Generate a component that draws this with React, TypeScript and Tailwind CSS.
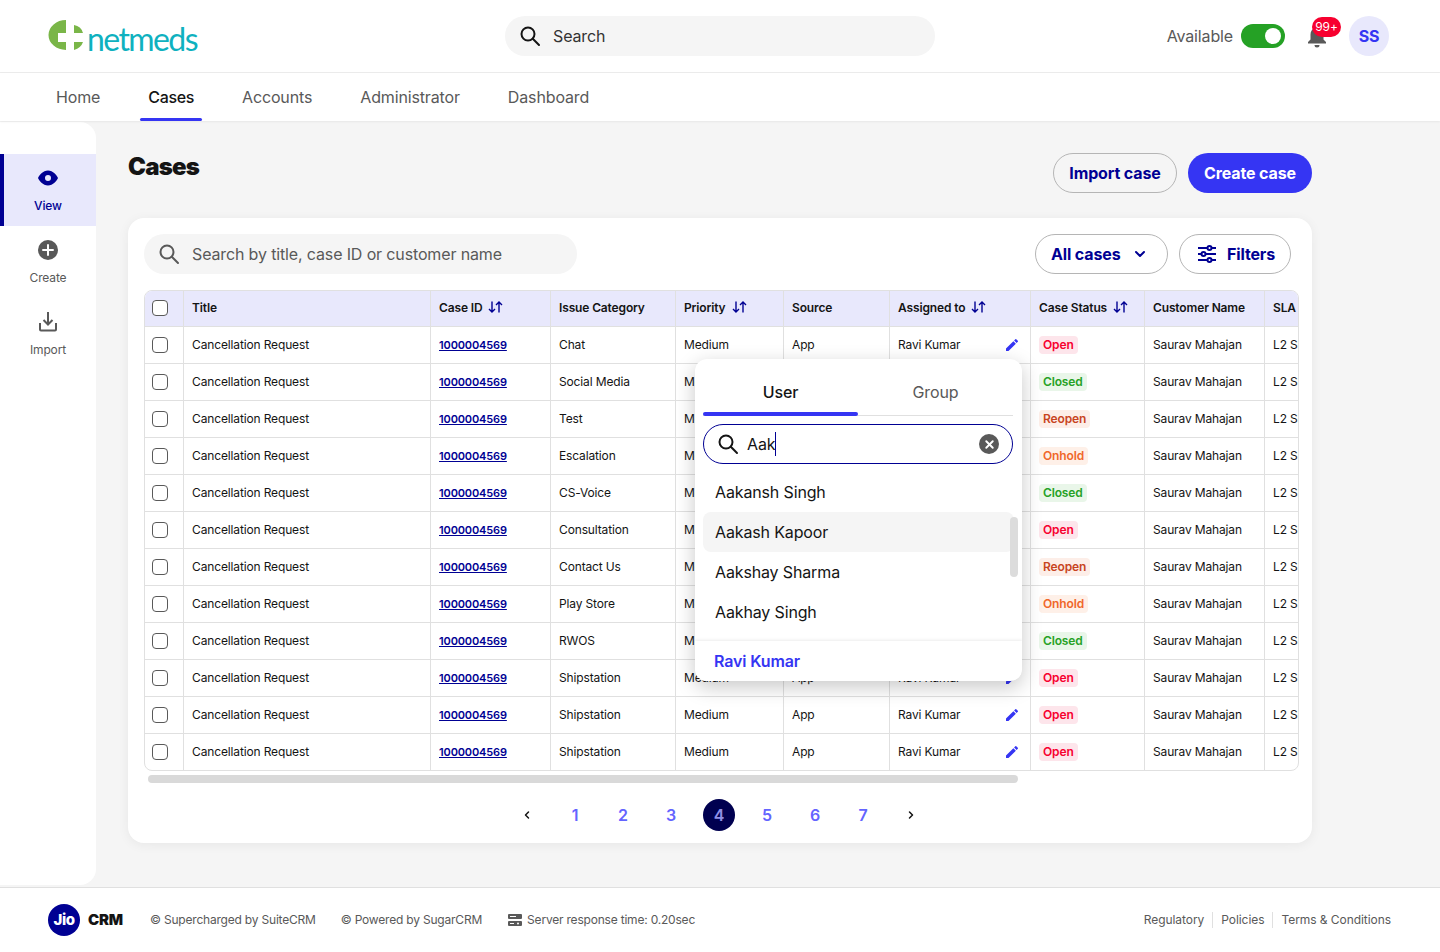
import { ChevronDown, ChevronLeft, ChevronRight, X } from "lucide-react";

const rows = [
  ["Chat", "Open"],
  ["Social Media", "Closed"],
  ["Test", "Reopen"],
  ["Escalation", "Onhold"],
  ["CS-Voice", "Closed"],
  ["Consultation", "Open"],
  ["Contact Us", "Reopen"],
  ["Play Store", "Onhold"],
  ["RWOS", "Closed"],
  ["Shipstation", "Open"],
  ["Shipstation", "Open"],
  ["Shipstation", "Open"],
];

const statusClass: Record<string, string> = {
  Open: "bg-[#fde5eb] text-[#f7002f]",
  Closed: "bg-[#e9f6e9] text-[#25a125]",
  Reopen: "bg-[#fdeee8] text-[#c8441f]",
  Onhold: "bg-[#fef0e8] text-[#f0672a]",
};

function SearchIcon({ color }: { color: string }) {
  return (
    <svg width="22" height="22" viewBox="0 0 22 22" fill="none" stroke={color} strokeWidth="2" className="shrink-0">
      <circle cx="9" cy="9" r="6.500" />
      <path d="M13.800 13.800L20 20" strokeLinecap="round" />
    </svg>
  );
}

function SortIcon() {
  return (
    <svg width="15" height="12" viewBox="0 0 15 12" fill="none" stroke="#000093" strokeWidth="1.4" className="ml-[6px] inline-block align-[-1px]">
      <path d="M4 0.500V11M1 8l3 3 3-3" />
      <path d="M11 11.500V1M8 4l3-3 3 3" />
    </svg>
  );
}

function EditIcon() {
  return (
    <svg width="16" height="16" viewBox="0 0 24 24" fill="#3535f3">
      <path d="M3 17.250V21h3.750L17.810 9.940l-3.750-3.750L3 17.250zM20.710 7.040a1 1 0 0 0 0-1.410l-2.340-2.340a1 1 0 0 0-1.410 0l-1.830 1.830 3.750 3.750 1.830-1.830z" />
    </svg>
  );
}

function Logo() {
  return (
    <div className="flex h-[72px] w-[200px] items-center">
      <svg width="40" height="36" viewBox="48 18 40 36" className="mt-[-1px] shrink-0">
        <path d="M66 20A17.500 15 0 0 0 66 50V42H58V33H66Z" fill="#7ab648" />
        <path d="M74 25Q81 26 83 33H74Z" fill="#7ab648" />
        <path d="M74 42H83Q81 48 74 50Z" fill="#7ab648" />
      </svg>
      <span className="ml-[-1px] mt-[5px] text-[32px] leading-none tracking-[-1.600px] text-[#0fb1bf] font-['Lato',sans-serif]">netmeds</span>
    </div>
  );
}

function Header() {
  return (
    <header className="flex h-[73px] shrink-0 items-center justify-between border-b border-[#ececec] bg-white pl-12 pr-[51px]">
      <Logo />
      <div className="absolute left-[505px] top-4 flex h-10 w-[430px] items-center rounded-full bg-[#f5f5f5] pl-[14px]">
        <SearchIcon color="#141414" />
        <span className="ml-[12px] text-base text-[#333]">Search</span>
      </div>
      <div className="flex items-center">
        <span className="text-base text-[#595959]">Available</span>
        <div className="ml-2 flex h-6 w-11 items-center justify-end rounded-full bg-[#25a125] pr-1">
          <div className="h-4 w-4 rounded-full bg-white" />
        </div>
        <div className="relative ml-[21px] h-6 w-[22px]">
          <svg width="22" height="24" viewBox="0 0 22 24" fill="#595959">
            <path d="M11 2a2 2 0 0 1 2 2c3 .8 4.500 3.500 4.500 6.500v5L20 18v1.500H2V18l2.500-2.500v-5C4.500 7.500 6 4.800 9 4a2 2 0 0 1 2-2Z" />
            <path d="M8.500 21h5a2.500 2.500 0 0 1-5 0Z" />
          </svg>
          <span className="absolute left-[6px] top-[-7px] flex h-5 w-[29px] items-center justify-center rounded-full bg-[#f7002f] text-xs text-white">99+</span>
        </div>
        <div className="ml-[21px] flex h-10 w-10 items-center justify-center rounded-full bg-[#e8e8fc] text-base font-bold text-[#3535f3]">SS</div>
      </div>
    </header>
  );
}

function Nav() {
  const items = ["Home", "Cases", "Accounts", "Administrator", "Dashboard"];
  return (
    <nav className="relative z-10 flex h-12 shrink-0 gap-8 bg-white pl-12 shadow-[0_1px_2px_rgba(0,0,0,0.06)]">
      {items.map((item) => (
        <div key={item} className={"relative flex h-12 items-center px-2 text-base " + (item === "Cases" ? "font-medium tracking-[-0.350px] text-[#141414]" : "text-[#595959]")}>
          {item}
          {item === "Cases" && <div className="absolute bottom-0 left-0 h-[3px] w-full rounded-full bg-[#3535f3]" />}
        </div>
      ))}
    </nav>
  );
}

function Sidebar() {
  return (
    <aside className="mt-px w-24 shrink-0 rounded-r-2xl bg-white pt-8 text-xs text-[#595959]">
      <div className="flex h-[72px] flex-col items-center border-l-4 border-[#000093] bg-[#e8e8fc] pr-1 pt-[14px] font-medium text-[#000093]">
        <svg width="20" height="20" viewBox="0 0 20 20" fill="#000093">
          <path fillRule="evenodd" d="M10 2.500c5 0 9 5 10 7.500-1 2.500-5 7.500-10 7.500S1 12.500 0 10c1-2.500 5-7.500 10-7.500Zm0 4.500a3 3 0 1 0 0 6 3 3 0 0 0 0-6Z" />
        </svg>
        <span className="mt-[10px]">View</span>
      </div>
      <div className="flex h-[72px] flex-col items-center pt-[14px]">
        <svg width="20" height="20" viewBox="0 0 20 20">
          <circle cx="10" cy="10" r="10" fill="#595959" />
          <path d="M10 5v10M5 10h10" stroke="#fff" strokeWidth="2" strokeLinecap="round" />
        </svg>
        <span className="mt-[10px]">Create</span>
      </div>
      <div className="flex h-[72px] flex-col items-center pt-[14px]">
        <svg width="20" height="20" viewBox="0 0 20 20" fill="none" stroke="#595959" strokeWidth="2">
          <path d="M10 0v12M5.500 8l4.500 4.500L14.500 8" />
          <path d="M2 11v6.500a1 1 0 0 0 1 1h14a1 1 0 0 0 1-1V11" />
        </svg>
        <span className="mt-[10px]">Import</span>
      </div>
    </aside>
  );
}

function Checkbox() {
  return <div className="ml-[7px] h-4 w-4 rounded-[4px] border border-[#595959] bg-white" />;
}

function CasesTable() {
  const th = "border-l border-[#e0e0e0] px-2 pb-[2px] text-left font-semibold text-[#141414]";
  const td = "border-l border-t border-[#e0e0e0] px-2 text-[#141414]";
  return (
    <div className="relative mt-4 h-[481px] w-[1155px] overflow-hidden rounded-lg border border-[#e0e0e0]">
      <table className="w-[1199px] table-fixed border-separate border-spacing-0 text-xs">
        <colgroup>
          <col className="w-[38px]" />
          <col className="w-[247px]" />
          <col className="w-[120px]" />
          <col className="w-[125px]" />
          <col className="w-[108px]" />
          <col className="w-[106px]" />
          <col className="w-[141px]" />
          <col className="w-[114px]" />
          <col className="w-[120px]" />
          <col className="w-[80px]" />
        </colgroup>
        <thead>
          <tr className="h-[35px] bg-[#e8e8fc]">
            <th className="pb-[2px]"><Checkbox /></th>
            <th className={th}>Title</th>
            <th className={th}>Case ID<SortIcon /></th>
            <th className={th}>Issue Category</th>
            <th className={th}>Priority<SortIcon /></th>
            <th className={th}>Source</th>
            <th className={th}>Assigned to<SortIcon /></th>
            <th className={th}>Case Status<SortIcon /></th>
            <th className={th}>Customer Name</th>
            <th className={th}>SLA</th>
          </tr>
        </thead>
        <tbody>
          {rows.map(([category, status], i) => (
            <tr key={i} className="h-[37px]">
              <td className="border-t border-[#e0e0e0]"><Checkbox /></td>
              <td className={td}>Cancellation Request</td>
              <td className={td}><span className="text-[11px] font-semibold text-[#000093] underline">1000004569</span></td>
              <td className={td}>{category}</td>
              <td className={td}>Medium</td>
              <td className={td}>App</td>
              <td className={td}>
                <div className="flex items-center justify-between pr-[2px]">
                  <span>Ravi Kumar</span>
                  <EditIcon />
                </div>
              </td>
              <td className={td}>
                <span className={"inline-block rounded-[4px] px-[4px] py-[1px] font-semibold " + statusClass[status]}>{status}</span>
              </td>
              <td className={td}>Saurav Mahajan</td>
              <td className={td + " whitespace-nowrap"}>L2 SLA</td>
            </tr>
          ))}
        </tbody>
      </table>
    </div>
  );
}

function AssignPopup() {
  return (
    <div className="absolute left-[695px] top-[359px] z-20 flex h-[322px] w-[327px] flex-col overflow-hidden rounded-xl bg-white shadow-[0_6px_20px_rgba(0,0,0,0.22)]">
      <div className="ml-2 mr-[9px] flex h-[57px] border-b border-[#e0e0e0] text-base">
        <div className="relative flex w-[155px] items-center justify-center pt-[9px] font-medium text-[#141414]">
          User
          <div className="absolute bottom-[-1px] left-0 h-[4px] w-full rounded-full bg-[#3535f3]" />
        </div>
        <div className="flex flex-1 items-center justify-center pt-[9px] text-[#595959]">Group</div>
      </div>
      <div className="ml-2 mr-[9px] mt-2 flex h-10 items-center rounded-full border border-[#000093] pl-[13px] pr-[13px]">
        <SearchIcon color="#141414" />
        <span className="ml-[8px] text-base text-[#141414]">Aak</span>
        <span className="h-[24px] w-px bg-[#000093]" />
        <span className="ml-auto flex h-5 w-5 items-center justify-center rounded-full bg-[#595959]">
          <X size={13} strokeWidth={3.5} className="text-white" />
        </span>
      </div>
      <div className="relative mx-2 mt-2 flex-1 text-base text-[#141414]">
        <div className="flex h-10 items-center px-3">Aakansh Singh</div>
        <div className="flex h-10 w-[311px] items-center rounded-lg bg-[#f5f5f5] px-3">Aakash Kapoor</div>
        <div className="flex h-10 items-center px-3">Aakshay Sharma</div>
        <div className="flex h-10 items-center px-3">Aakhay Singh</div>
        <div className="absolute left-[307px] top-[45px] h-[60px] w-2 rounded-full bg-[#dcdcdc]" />
      </div>
      <div className="flex h-10 items-center bg-white pl-[19px] text-base font-semibold text-[#3535f3] shadow-[0_-1px_3px_rgba(0,0,0,0.08)]">Ravi Kumar</div>
    </div>
  );
}

function Pagination() {
  return (
    <div className="mt-4 flex h-8 justify-center pr-[2px] text-base font-semibold text-[#6464ff]">
      <div className="flex w-12 items-center justify-center text-[#141414]"><ChevronLeft size={12} strokeWidth={3} /></div>
      {[1, 2, 3, 4, 5, 6, 7].map((n) => (
        <div key={n} className="flex w-12 items-center justify-center">
          {n === 4 ? <span className="flex h-8 w-8 items-center justify-center rounded-full bg-[#000050] text-[#8f8fe6]">{n}</span> : n}
        </div>
      ))}
      <div className="flex w-12 items-center justify-center text-[#141414]"><ChevronRight size={12} strokeWidth={3} /></div>
    </div>
  );
}

function Footer() {
  return (
    <footer className="flex h-[65px] shrink-0 items-center justify-between border-t border-[#e0e0e0] bg-white pl-12 pr-[49px] text-xs text-[#595959]">
      <div className="flex items-center tracking-[-0.200px]">
        <div className="flex h-8 w-8 items-center justify-center rounded-full bg-[#000093] text-[15px] font-extrabold tracking-[-0.500px] text-white">Jio</div>
        <span className="ml-2 text-[15px] font-black tracking-[-0.200px] text-[#141414]">CRM</span>
        <span className="ml-[27px]">© Supercharged by SuiteCRM</span>
        <span className="ml-[25px]">© Powered by SugarCRM</span>
        <svg width="14" height="12" viewBox="0 0 14 12" fill="#595959" className="ml-[26px]">
          <path fillRule="evenodd" d="M1 0h12a1 1 0 0 1 1 1v3a1 1 0 0 1-1 1H1a1 1 0 0 1-1-1V1a1 1 0 0 1 1-1Zm1 2v1h6V2H2Z" />
          <path fillRule="evenodd" d="M1 7h12a1 1 0 0 1 1 1v3a1 1 0 0 1-1 1H1a1 1 0 0 1-1-1V8a1 1 0 0 1 1-1Zm1 2v1h4V9H2Zm8-.500a1 1 0 1 0 0 2 1 1 0 0 0 0-2Z" />
        </svg>
        <span className="ml-[5px]">Server response time: 0.20sec</span>
      </div>
      <div className="flex items-center tracking-[-0.060px]">
        <span>Regulatory</span>
        <span className="mx-2 h-4 w-px bg-[#e0e0e0]" />
        <span>Policies</span>
        <span className="mx-2 h-4 w-px bg-[#e0e0e0]" />
        <span>Terms &amp; Conditions</span>
      </div>
    </footer>
  );
}

export default function App() {
  return (
    <div className="relative flex h-[952px] w-[1440px] flex-col overflow-hidden bg-[#f5f5f5] font-['Inter',sans-serif] tracking-[-0.140px]">
      <Header />
      <Nav />
      <div className="flex flex-1 pb-[2px]">
        <Sidebar />
        <main className="w-[1184px] pl-8 pt-8">
          <div className="flex w-[1184px] items-start justify-between">
            <h1 className="text-2xl font-black leading-[28px] tracking-[-0.800px] text-[#141414]">Cases</h1>
            <div className="flex gap-[11px]">
              <button className="h-10 w-[124px] rounded-full border border-[#b5b5b5] text-base font-bold text-[#000093]">Import case</button>
              <button className="h-10 w-[124px] rounded-full bg-[#3535f3] text-base font-bold text-white">Create case</button>
            </div>
          </div>
          <section className="mt-[25px] h-[625px] w-[1184px] rounded-2xl bg-white p-4 shadow-[0_2px_12px_rgba(0,0,0,0.06)]">
            <div className="flex h-10 items-center">
              <div className="flex h-10 w-[433px] items-center rounded-full bg-[#f5f5f5] pl-[14px] text-base text-[#595959]">
                <SearchIcon color="#595959" />
                <span className="ml-[12px]">Search by title, case ID or customer name</span>
              </div>
              <button className="ml-auto flex h-10 w-[133px] items-center rounded-full border border-[#b5b5b5] pl-[15px] text-base font-bold text-[#000093]">
                All cases
                <ChevronDown size={16} strokeWidth={3} className="ml-[12px]" />
              </button>
              <button className="ml-[11px] mr-[5px] flex h-10 w-[112px] items-center rounded-full border border-[#b5b5b5] pl-[17px] text-base font-bold text-[#000093]">
                <svg width="20" height="20" viewBox="0 0 20 20" fill="none" stroke="#000093" strokeWidth="2" className="mr-[10px]">
                  <path d="M1 4h9M15 4h4M1 10h3M9 10h10M1 16h9M15 16h4" />
                  <circle cx="12.500" cy="4" r="2" />
                  <circle cx="6.500" cy="10" r="2" />
                  <circle cx="12.500" cy="16" r="2" />
                </svg>
                Filters
              </button>
            </div>
            <CasesTable />
            <div className="mx-1 mt-1 h-2 w-[870px] rounded-full bg-[#d9d9d9]" />
            <Pagination />
          </section>
        </main>
      </div>
      <AssignPopup />
      <Footer />
    </div>
  );
}
